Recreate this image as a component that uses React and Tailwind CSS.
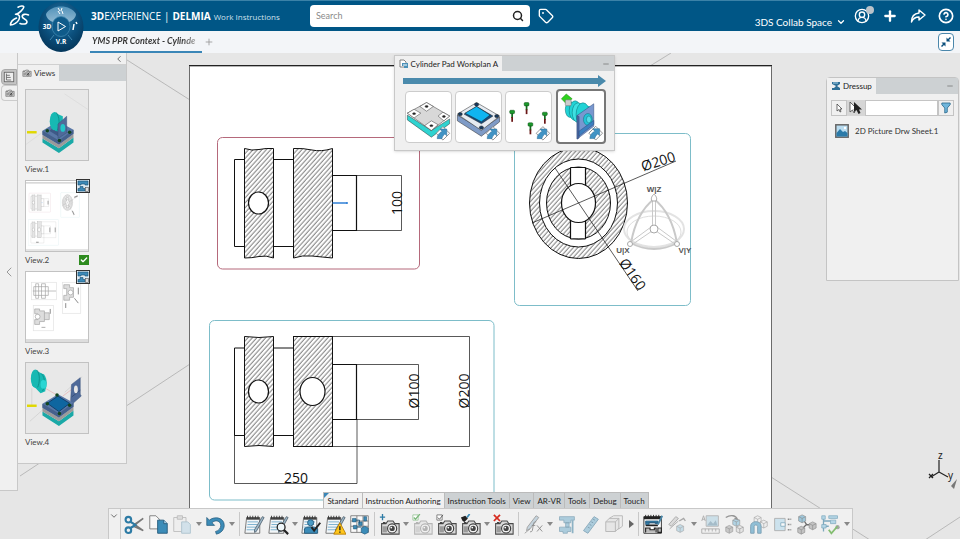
import React, { useState } from 'react';
import { Search, Tag, Plus, ChevronDown, ChevronLeft, CircleHelp, CircleUserRound, Minus, Check } from 'lucide-react';

const RIBBON_TABS = ['Standard', 'Instruction Authoring', 'Instruction Tools', 'View', 'AR-VR', 'Tools', 'Debug', 'Touch'];

/* ---------- technical drawing ---------- */

const Dimension = ({ x, y, angle, children }) => (
    <text
        x={x}
        y={y}
        transform={`rotate(${angle} ${x} ${y})`}
        textAnchor="middle"
        dominantBaseline="central"
        fontSize="14"
        fontFamily="Open Sans, sans-serif"
        fill="#111"
    >
        {children}
    </text>
);

const SheetDrawing = ({ labels }) => (
    <g fill="none" stroke="#111" strokeWidth="1">
        <defs>
            <pattern id="hatch" width="3.3" height="3.3" patternUnits="userSpaceOnUse" patternTransform="rotate(42)">
                <rect width="3.3" height="3.3" fill="#fff" stroke="none" />
                <path d="M1 0V3.3" stroke="#333" strokeWidth="0.65" />
            </pattern>
        </defs>

        {/* side view */}
        <rect x="217.5" y="137.5" width="202" height="131.5" rx="5" stroke="#b5697b" />
        <path d="M244 159.5H234.5V246.5H244M273 159.5H293M273 246.5H293" />
        <path d="M244.5 148.5Q252 151 259 149.5T273.5 148.5V258Q266 255 259 256.5T244.5 258Z" fill="url(#hatch)" />
        <path d="M293.5 148.5Q303 148 312 150T332.500 148.5V258Q322 257 312 256T293.5 258Z" fill="url(#hatch)" />
        <ellipse cx="258.5" cy="203" rx="10" ry="11" fill="#fff" strokeWidth="1.2" />
        <path d="M332.5 175.5H356.5V230.5H332.5" strokeWidth="1.2" />
        <path d="M357 175.5H401.5V230.5H357" strokeWidth="0.7" />
        <path d="M332.5 203H347" stroke="#2f7fd6" strokeWidth="1.5" />
        <circle cx="347" cy="203" r="1" fill="#2f7fd6" stroke="none" />

        {/* lower view with all dimensions */}
        <rect x="209.5" y="320.5" width="284.5" height="179.5" rx="5" stroke="#7dbdc9" />
        <path d="M244 348H234.5V435.5H244M273 348H293M273 435.5H293" />
        <path d="M244.5 336.5Q259 338.5 273.5 336.5V446.5Q259 444.5 244.5 446.5Z" fill="url(#hatch)" />
        <rect x="293.5" y="336.5" width="39" height="110" fill="url(#hatch)" />
        <ellipse cx="258.5" cy="391.5" rx="10" ry="11.5" fill="#fff" strokeWidth="1.2" />
        <ellipse cx="312.5" cy="391.5" rx="12.5" ry="14" fill="#fff" strokeWidth="1.2" />
        <path d="M332.5 364.5H356.5V419.5H332.5" strokeWidth="1.2" />
        <path d="M357 364.5H418.5V419.5H357M332.5 336.5H469.5V446.5H332.5M234.5 435V483.5H357V419" strokeWidth="0.7" />

        {/* section */}
        <rect x="514.5" y="133.5" width="176" height="172" rx="5" stroke="#7dbdc9" />
        <ellipse cx="578.5" cy="203" rx="49" ry="55.5" fill="url(#hatch)" />
        <ellipse cx="578.5" cy="203" rx="39" ry="44" fill="#fff" />
        <ellipse cx="578.5" cy="203" rx="32" ry="36" fill="url(#hatch)" />
        <rect x="570.5" y="167.5" width="15" height="71" fill="#fff" stroke="none" />
        <path d="M570.5 167.5V239M585.5 167.5V239M570.5 167.5H585.5M570.5 239H585.5" strokeWidth="1.2" />
        <ellipse cx="578.5" cy="203" rx="17" ry="19.5" fill="#fff" strokeWidth="1.2" />
        <path d="M532 223L676 161M555 168L638 291" strokeWidth="0.7" />

        {labels ? (
            <g stroke="none">
                <Dimension x={396} y={203} angle={-90}>100</Dimension>
                <Dimension x={413} y={391} angle={-90}>Ø100</Dimension>
                <Dimension x={463} y={391} angle={-90}>Ø200</Dimension>
                <Dimension x={296} y={477} angle={0}>250</Dimension>
                <Dimension x={658} y={161} angle={-18}>Ø200</Dimension>
                <Dimension x={633} y={274} angle={55}>Ø160</Dimension>
            </g>
        ) : (
            <path d="M396 190V216M413 375V408M463 375V408M284 478H308M642 167L674 156M624 260L642 288" stroke="#777" strokeWidth="8" />
        )}
    </g>
);

const Robot = () => (
    <g fill="none" stroke="#c9c9c9">
        <ellipse cx="654" cy="229" rx="30" ry="18" strokeWidth="2" stroke="#e3e3e3" />
        <ellipse cx="654" cy="232" rx="27" ry="16" stroke="#dedede" />
        <path d="M654 199C640 210 634 226 631 243M654 199C668 210 674 226 677 243M631 243C645 251 663 251 677 243" strokeWidth="2" />
        <path d="M652.5 201V226M655.5 201V226M651 227L632 241M652 231L633 244M657 227L676 241M656 231L675 244" />
        <g fill="#fff" stroke="#a8a8a8">
            <circle cx="654" cy="229" r="4" />
            <path d="M652 201C650 198 653 195 654 194C655 195 658 198 656 201Z" />
            <circle cx="630" cy="244" r="2.5" />
            <circle cx="677" cy="244" r="2.5" />
        </g>
        <g fill="#555" stroke="none" fontSize="8" fontWeight="700" fontFamily="Liberation Sans, sans-serif" textAnchor="middle">
            <text x="654" y="192">W|Z</text>
            <text x="623" y="253">U|X</text>
            <text x="685" y="253">V|Y</text>
        </g>
    </g>
);

const AxisTriad = () => (
    <g fill="none" stroke="#222">
        <path d="M939 472V460M939 472L931 477M939 472L948 477" strokeWidth="1.2" />
        <path d="M929 474L933 478M933 474L929 478" strokeWidth="1.3" />
        <path d="M957 479L951 486L954 489Z" fill="#777" stroke="none" />
        <g fill="#222" stroke="none" fontSize="10" fontFamily="Noto Sans, sans-serif">
            <text x="938" y="459">z</text>
            <text x="948" y="479">y</text>
        </g>
    </g>
);

const Viewport = () => (
    <svg className="absolute inset-0 h-full w-full" viewBox="0 53 960 486" preserveAspectRatio="xMidYMid slice">
        <path
            d="M116 53L190 100M20 476L190 364M650 66L671 53M771 477L870 540M925 540L960 517"
            stroke="#adadad"
            strokeWidth="0.8"
            fill="none"
        />
        <rect x="189.5" y="66" width="582" height="500" fill="#fff" stroke="#6b6b6b" />
        <path d="M189 65.500H772" stroke="#222" />
        <SheetDrawing labels />
        <Robot />
        <AxisTriad />
    </svg>
);

/* ---------- header ---------- */

const DsLogo = () => (
    <svg viewBox="0 0 24 24" className="size-6" fill="none" stroke="#fff" strokeWidth="1.6" strokeLinecap="round" strokeLinejoin="round">
        <path d="M10 3.200C12 2 16 1.300 15.800 3C15.500 5.500 11 9 8.500 10.300" />
        <path d="M7.500 10.300C11 10 12.500 12.500 11 15.500C9.500 18.500 5.500 21 2.500 21C2.500 18.500 5 15.500 8.500 14" />
        <path d="M20.500 11C18 9.800 14.200 10 14.200 12.500C14.200 15 19 15 19 17.700C19 20.300 15 20.500 12 19.500" />
    </svg>
);

const CompassButton = () => (
    <button type="button" aria-label="Compass" className="absolute left-[38px] top-px z-10">
        <svg viewBox="0 0 46 51" className="h-[51px] w-[46px]">
            <defs>
                <radialGradient id="globe" cx="50%" cy="35%" r="65%">
                    <stop offset="0" stopColor="#2e7fae" />
                    <stop offset="0.6" stopColor="#0b4f7c" />
                    <stop offset="1" stopColor="#04365a" />
                </radialGradient>
                <linearGradient id="globeLight" x1="0" y1="0" x2="0" y2="1">
                    <stop offset="0" stopColor="#5d9cc2" />
                    <stop offset="1" stopColor="#a3c6dc" />
                </linearGradient>
            </defs>
            <ellipse cx="23" cy="25" rx="22.5" ry="25" fill="url(#globe)" />
            <path d="M8 12C13 2 33 2 38 12C38 16 34 19 31 20C28 14 18 14 15 20C12 19 8 16 8 12Z" fill="url(#globeLight)" opacity="0.85" />
            <ellipse cx="23" cy="24.5" rx="9" ry="10" fill="#0f5b8a" stroke="#3f86af" strokeWidth="0.8" />
            <path d="M20 20V29L27.5 24.5Z" fill="none" stroke="#fff" />
            <path d="M12 38L16 33M34 38L30 33" stroke="#3f86af" />
            <path d="M20 6L22 9M24 6L23 9M20 9L22 12M24 9L25 12" stroke="#fff" fill="none" />
            <path d="M36 22L35 28M38 20L39 22" stroke="#fff" strokeWidth="1.5" />
            <g fill="#fff" fontSize="6.5" fontWeight="700" fontFamily="Open Sans, sans-serif" textAnchor="middle">
                <text x="9" y="27">3D</text>
                <text x="23" y="42">V.R</text>
            </g>
        </svg>
    </button>
);

const ShareIcon = () => (
    <svg viewBox="0 0 16 16" className="size-4" fill="none" stroke="#fff" strokeWidth="1.4" strokeLinejoin="round">
        <path d="M9 2L15 7L9 12V9C5.500 9 3 10.500 1.500 14C1.500 9 4 5.500 9 5Z" />
    </svg>
);

const Header = () => (
    <header className="relative flex h-[31px] items-center border-t border-[#3b82a8] bg-[#005686] text-white">
        <div className="flex w-[91px] pl-2">
            <DsLogo />
        </div>
        <CompassButton />
        <div className="flex w-[219px] items-baseline gap-[3px] whitespace-nowrap font-['Open_Sans',sans-serif] text-[10px]">
            <span><b>3D</b>EXPERIENCE</span>
            <span>|</span>
            <b>DELMIA</b>
            <span className="text-[8px] text-[#cfe0ec]">Work Instructions</span>
        </div>
        <label className="flex h-[22px] w-[220px] items-center rounded-sm bg-white px-1.5">
            <input
                type="search"
                aria-label="Search"
                placeholder="Search"
                className="min-w-0 flex-1 text-[9px] text-gray-800 outline-none placeholder:text-[#8a8a8a]"
            />
            <Search className="size-3 text-[#222]" strokeWidth={3} />
        </label>
        <button type="button" aria-label="Tags" className="ml-2">
            <Tag className="size-4" strokeWidth={2} />
        </button>
        <div className="ml-auto flex items-center gap-3 pr-1.5">
            <button type="button" className="flex items-center gap-1 pt-3 text-[10px] leading-3">
                3DS Collab Space
                <ChevronDown className="size-2.5" strokeWidth={3} />
            </button>
            <button type="button" aria-label="Profile" className="relative -ml-1">
                <CircleUserRound className="size-4" strokeWidth={2} />
                <span className="absolute -right-1 -top-0.5 size-2 rounded-full bg-[#b9c3ca]" />
            </button>
            <button type="button" aria-label="Add"><Plus className="size-4" strokeWidth={3.5} /></button>
            <button type="button" aria-label="Share"><ShareIcon /></button>
            <button type="button" aria-label="Help"><CircleHelp className="size-4" strokeWidth={2.5} /></button>
        </div>
    </header>
);

const TabBar = () => (
    <nav className="flex h-[22px] items-stretch bg-[#f3f5f8] pl-[90px] pr-1.5">
        <a href="#context" className="flex w-28 items-center overflow-hidden whitespace-nowrap border-b-2 border-[#3a86b7] px-0.5 text-[9px] font-bold italic">
            <span className="bg-gradient-to-r from-[#333] from-85% to-[#bbb] bg-clip-text pr-0.5 text-transparent">YMS PPR Context - Cylinde</span>
        </a>
        <button type="button" aria-label="New tab" className="ml-0.5 text-[#999]"><Plus className="size-2.5" /></button>
        <button type="button" aria-label="Exit full screen" className="my-0.5 ml-auto flex w-4 items-center justify-center rounded-sm border border-[#4b87ab] bg-white">
            <svg viewBox="0 0 12 12" className="size-3" fill="#0b4f7c">
                <path d="M6.500 5.500V1.500L8 3L10 1L11 2L9 4L10.500 5.500ZM5.500 6.500V10.500L4 9L2 11L1 10L3 8L1.500 6.500Z" />
            </svg>
        </button>
    </nav>
);

/* ---------- left side ---------- */

const CameraShape = ({ faded }) => (
    <g opacity={faded ? 0.35 : 1}>
        <path d="M2 8H7L9 5H15L17 8H22V20H2Z" fill="#d9d9d9" stroke="#4a4a4a" strokeWidth="1.2" />
        <path d="M3 11H8V18H3Z" fill="#9b9b9b" />
        <path d="M3.500 7H6.500" stroke="#333" strokeWidth="1.5" />
        <circle cx="14" cy="13.500" r="5.2" fill="#f4f4f4" stroke="#3d3d3d" strokeWidth="1.3" />
        <circle cx="14" cy="13.500" r="3" fill="#444" />
        <circle cx="13" cy="12.500" r="1" fill="#fff" />
    </g>
);

const TreeIcon = () => (
    <svg viewBox="0 0 14 14" className="size-3" fill="none" stroke="#666">
        <rect x="1.500" y="1.500" width="11" height="11" fill="#eee" />
        <path d="M4 3V10.500H9.500M4 5H8M4 7.500H9" />
    </svg>
);

const SheetBadge = () => (
    <svg viewBox="0 0 14 14" className="size-3.5">
        <rect x="0.500" y="0.500" width="13" height="13" fill="#dceaf2" stroke="#333" />
        <path d="M2 2H12V6H9V5H5V6H2Z" fill="#3d8ab8" stroke="#1d4e70" strokeWidth="0.6" />
        <path d="M2 12V9.500H4V7.500H7V9.500H9V12Z" fill="#3d8ab8" stroke="#1d4e70" strokeWidth="0.6" />
        <rect x="9.500" y="8.500" width="3" height="4" fill="#ddd" stroke="#555" strokeWidth="0.6" />
    </svg>
);

const IsoBase = ({ open }) => (
    <g>
        <path d="M17 50L34 60L49 49V54L34 65L17 54Z" fill="#1aa9a7" />
        <path d="M17 46L34 56L49 45V49L34 60L17 50Z" fill="#9a9a9a" />
        <path d="M17 42L33 32L49 41V45L34 56L17 46Z" fill="#5877a6" />
        <path d="M17 42L34 52L49 41V45L34 56L17 46Z" fill="#45608c" />
        {open && <path d="M22 41.500L33 34L45 41.500L34 50Z" fill="#0f66a0" stroke="#123f6b" />}
        {!open && <path d="M24 42L33 36L42 41L34 48Z" fill="#3e5987" />}
        {[[22, 42], [34.5, 52], [45, 43.5], ...(open ? [[32, 33]] : [])].map(([x, y]) => (
            <circle key={x} cx={x} cy={y} r="1.8" fill="#12451f" />
        ))}
    </g>
);

const AssemblyThumb = () => (
    <svg viewBox="0 0 64 72" className="h-full w-full">
        <path d="M0 56L30 34M64 20L40 4" stroke="#ddd" />
        <path d="M1 43.500H11" stroke="#e0d800" strokeWidth="2.5" />
        <IsoBase />
        <path d="M29 23L38 27V44L30 42Z" fill="#17b9b3" />
        <ellipse cx="29.500" cy="32" rx="5" ry="9.500" fill="#17b9b3" />
        <path d="M31 23C35 27 35 37 32 42" stroke="#0c8783" fill="none" strokeWidth="0.8" />
        <path d="M33 35L42 27V44L33 50Z" fill="#4f6a99" stroke="#38507a" strokeWidth="0.5" />
        <ellipse cx="38" cy="39" rx="2.5" ry="4" fill="#22c5c8" />
    </svg>
);

const ExplodedThumb = () => (
    <svg viewBox="0 0 64 72" className="h-full w-full">
        <path d="M6 26V44M4 60L22 44M40 30L58 14" stroke="#d5d5d5" fill="none" />
        <path d="M20 26L32 33M38 34L50 25" stroke="#e7a4a4" strokeWidth="0.6" />
        <path d="M1 44H11" stroke="#e0d800" strokeWidth="2.5" />
        <path d="M9 7L19 12L20 29L15 31L9 25Z" fill="#17b9b3" />
        <ellipse cx="9.500" cy="16" rx="4.5" ry="9.5" fill="#17b9b3" />
        <ellipse cx="16" cy="20.500" rx="5.5" ry="9.5" fill="#17b9b3" />
        <path d="M11 7C15 11 14 21 12 25M16 11C20 15 20 24 17 29" stroke="#0c8783" fill="none" strokeWidth="0.8" />
        <ellipse cx="18" cy="22" rx="3" ry="4.5" fill="#2bd6d3" />
        <path d="M47 22L56 15V32L57 34L48 42L46 39Z" fill="#4f6a99" stroke="#38507a" strokeWidth="0.5" />
        <path d="M47 35L56 28" stroke="#38507a" />
        <ellipse cx="51.500" cy="27" rx="2" ry="4" fill="#e6e6e6" />
        <IsoBase open />
    </svg>
);

const SheetThumb = () => (
    <svg viewBox="189 53 582 486" preserveAspectRatio="none" className="h-full w-full bg-[#fff]">
        <path d="M189 66H771" stroke="#ccc" strokeWidth="10" />
        <path d="M189 532H771" stroke="#ddd" strokeWidth="12" />
        <g opacity="0.8" strokeWidth="2"><SheetDrawing /></g>
    </svg>
);

const SectionsThumb = () => (
    <svg viewBox="0 0 64 72" className="h-full w-full bg-white" fill="none" stroke="#a3a3a3" strokeWidth="0.7">
        <path d="M0 70.500H64" stroke="#ddd" strokeWidth="3" />
        <rect x="5.500" y="10.500" width="26" height="18" stroke="#e2e2e2" />
        <rect x="37.500" y="10.500" width="19" height="32" stroke="#e2e2e2" />
        <rect x="7.500" y="34.500" width="21" height="26" stroke="#e2e2e2" />
        <path d="M8 15H23V24H8ZM10 12H13V27H10ZM16 12H20V27H16ZM7 19.500H31" />
        <path d="M39 13H45V16H49V26H45V29H39V24H42V17H39Z" fill="#ddd" />
        <circle cx="46" cy="21" r="2.5" fill="#fff" />
        <path d="M54 16V23M41 32V37M50 27L54 32M25 38V43" stroke="#888" strokeWidth="1" />
        <path d="M9 38H14V40H19V51H14V54H9V49H12V43H9ZM19 42H24V49H19" fill="#ddd" />
        <circle cx="12" cy="46" r="2.5" fill="#fff" />
        <path d="M16 57H20" stroke="#888" />
    </svg>
);

const views = [
    { name: 'View.1', Picture: AssemblyThumb },
    { name: 'View.2', Picture: SheetThumb, sheet: true, current: true },
    { name: 'View.3', Picture: SectionsThumb, sheet: true },
    { name: 'View.4', Picture: ExplodedThumb },
];

const ViewsPanel = () => (
    <section className="w-[109px] self-start border-b border-r border-[#c8c8c8] bg-[#f0f0f0] pb-2.5">
        <div className="flex h-3 items-center justify-end border-b border-[#d0d0d0] pr-0.5">
            <button type="button" aria-label="Collapse"><ChevronLeft className="size-2.5 text-[#555]" /></button>
        </div>
        <div className="flex h-4 bg-[#cdd1d3]">
            <h2 className="flex items-center gap-0.5 bg-[#f0f0f0] px-1 text-[8px] text-[#333]">
                <svg viewBox="0 0 24 24" className="size-2.5"><CameraShape /></svg>
                Views
            </h2>
        </div>
        <ul className="px-[7px] pt-2">
            {views.map(({ name, Picture, sheet, current }) => (
                <li key={name} className="w-16">
                    <button type="button" className="relative block h-[72px] w-full border border-[#c2c2c2] bg-[#e8e8e8]" aria-label={`Open ${name}`}>
                        <Picture />
                        {sheet && <span className="absolute -right-0.5 -top-0.5"><SheetBadge /></span>}
                    </button>
                    <div className="flex h-[19px] items-center justify-between pb-1 text-[8px] text-[#444]">
                        {name}
                        {current && (
                            <span className="flex size-2.5 items-center justify-center bg-[#2e8b1f] text-white">
                                <Check className="size-2" strokeWidth={4} />
                            </span>
                        )}
                    </div>
                </li>
            ))}
        </ul>
    </section>
);

const SideRail = () => (
    <aside className="mb-12 flex w-[18px] flex-col items-end border-b border-r border-[#c8c8c8] bg-[#f0f0f0] pb-12 pt-4">
        <button type="button" aria-label="Tree" className="flex h-4 w-4 items-center justify-center rounded-l-sm border border-[#aaa] bg-[#c4c4c4]"><TreeIcon /></button>
        <button type="button" aria-label="Views" className="flex h-4 w-4 items-center justify-center rounded-l-sm border border-r-0 border-[#ccc]">
            <svg viewBox="0 0 24 24" className="size-2.5"><CameraShape /></svg>
        </button>
        <button type="button" aria-label="Hide panels" className="my-auto text-[#999]"><ChevronLeft className="size-4" strokeWidth={1.5} /></button>
    </aside>
);

/* ---------- floating panels ---------- */

const LinkBadge = () => (
    <g strokeLinejoin="round">
        <path d="M38 36L45 43L38 50L31 43Z" fill="#fff" stroke="#777" strokeWidth="0.8" />
        <path d="M35 38.500H42V45.500L40 43.800C38 45.500 37.500 47 37 48.500L32 48.500C32 45 34 42.500 37 41Z" fill="#4193c4" stroke="#2a6a95" strokeWidth="0.5" />
    </g>
);

const PadArt = () => (
    <g stroke="#333" strokeWidth="0.5" strokeLinejoin="round">
        <path d="M1 24L26 40L45 28V33L26 47L1 29Z" fill="#2fd3d0" />
        <path d="M1 22L21 11L45 25L26 40Z" fill="#d8d8d8" />
        <path d="M14 15L21 11L28 15L21 20ZM1 22L8 18L15 22L8 27ZM33 25L38 21L45 25L39 30ZM19 35L26 30L33 34L26 40Z" fill="#fff" />
        {[[21, 15], [8, 22.5], [39, 25.5], [26, 35]].map(([x, y]) => <ellipse key={x} cx={x} cy={y} rx="1.6" ry="1" fill="#222" />)}
    </g>
);

const FrameArt = () => (
    <g stroke="#222" strokeWidth="0.5" strokeLinejoin="round">
        <path d="M1 24L26 39L45 26V31L26 46L1 30Z" fill="#7f9bc6" />
        <path d="M1 23L21 11L45 25L26 40Z" fill="#e6ebf1" />
        <path d="M8 23L21 15L38 25L26 33Z" fill="#154c7e" />
        <path d="M9 22L21 15L35 24L26 31Z" fill="#0fb5f0" />
        {[[21, 13], [4, 23], [42, 25], [26, 37]].map(([x, y]) => <ellipse key={x} cx={x} cy={y} rx="2.2" ry="1.7" fill="#16395e" />)}
    </g>
);

const BoltsArt = () => (
    <g>
        {[[21, 11], [6, 19], [40, 21], [25, 32]].map(([x, y]) => (
            <g key={x}>
                <rect x={x - 2.5} y={y} width="5" height="3.5" rx="1" fill="#1c9a2c" stroke="#0a4a12" strokeWidth="0.5" />
                <path d={`M${x} ${y + 3}V${y + 8}`} stroke="#126a1e" strokeWidth="1.8" />
                <path d={`M${x} ${y + 7}V${y + 12}`} stroke="#6a1616" strokeWidth="1.8" />
            </g>
        ))}
    </g>
);

const CylinderArt = () => (
    <g stroke="#0a6a70" strokeWidth="0.5" strokeLinejoin="round">
        <path d="M13 11L34 16V37L26 37L13 28Z" fill="#22d3d6" stroke="none" />
        <ellipse cx="12" cy="19" rx="5" ry="8" fill="#22d3d6" />
        <ellipse cx="17" cy="20" rx="6" ry="10" fill="#22d3d6" />
        <ellipse cx="20" cy="22" rx="6" ry="10" fill="#3ee0e2" />
        <ellipse cx="25" cy="24" rx="7" ry="12" fill="#22d3d6" />
        <path d="M19 25L36 13V36L19 49Z" fill="#7897cf" stroke="#2e4779" />
        <path d="M19 25L21 26V48L19 49Z" fill="#4c6aa5" stroke="#2e4779" />
        <ellipse cx="30" cy="29" rx="4.5" ry="6" fill="#22c3d9" />
        <ellipse cx="31" cy="29" rx="2.5" ry="3.5" fill="#55dbe8" />
        <path d="M21 41L36 30V34L21 46Z" fill="#3c7fc0" stroke="#2e4779" />
        <path d="M8 3L14 8L8 13L3 8Z" fill="#2fd21f" stroke="#1c8712" />
        <rect x="7" y="9" width="6" height="6" rx="1" fill="#ccc" stroke="#666" />
    </g>
);

const steps = [
    { name: 'Pad', Art: PadArt },
    { name: 'Frame', Art: FrameArt },
    { name: 'Bolts', Art: BoltsArt },
    { name: 'Cylinder', Art: CylinderArt },
];

const WorkplanPanel = () => {
    const [selected, setSelected] = useState(3);
    return (
        <section className="absolute left-[41%] top-0.5 w-[221px] border border-[#c8c8c8] bg-[#f0f0f0] shadow-sm">
            <div className="flex h-[15px] items-center justify-between bg-[#cdd1d3] pr-1">
                <h2 className="flex h-full items-center gap-0.5 bg-[#f0f0f0] px-1 text-[8px] text-[#222]">
                    <svg viewBox="0 0 10 10" className="size-2.5">
                        <path d="M1 1H5L7 3V8H1Z" fill="#fff" stroke="#666" strokeWidth="0.8" />
                        <path d="M3 4H9V9H5V7H3Z" fill="#4a90b8" />
                        <path d="M4 6H8" stroke="#fff" />
                    </svg>
                    Cylinder Pad Workplan A
                </h2>
                <button type="button" aria-label="Minimize" className="text-[#666]"><Minus className="size-2" /></button>
            </div>
            <div className="flex flex-col px-2 pb-1.5 pt-1">
                <svg viewBox="0 0 203 12" preserveAspectRatio="none" className="h-3 w-full" fill="#4a8aac">
                    <path d="M0 3H195V0L203 6L195 12V9H0Z" />
                </svg>
                <div className="mt-0.5 flex items-center justify-between pl-0.5">
                    {steps.map(({ name, Art }, index) => (
                        <button
                            key={name}
                            type="button"
                            aria-label={name}
                            onClick={() => setSelected(index)}
                            className={`rounded-sm bg-white ${
                                selected === index ? 'h-[55px] w-[50px] border-2 border-[#777]' : 'h-[52px] w-[47px] border border-[#ccc]'
                            }`}
                        >
                            <svg viewBox="0 0 46 52" className="h-full w-full">
                                <Art />
                                <LinkBadge />
                            </svg>
                        </button>
                    ))}
                </div>
            </div>
        </section>
    );
};

const DressupPanel = () => (
    <section className="absolute right-px top-6 h-[204px] w-[133px] rounded-t-sm border border-[#c4c4c4] bg-[#f0f0f0]">
        <div className="flex h-4 items-center justify-between bg-[#cdd1d3] pr-1">
            <h2 className="flex h-full items-center gap-0.5 bg-[#f0f0f0] px-1 text-[8px] text-[#222]">
                <svg viewBox="0 0 10 10" className="size-2.5">
                    <path d="M1 1H9V3L6 5L9 7V9H1V7H3L5 5L1 3Z" fill="#2f6f96" />
                    <path d="M2 2H7" stroke="#a8d3ea" />
                </svg>
                Dressup
            </h2>
            <button type="button" aria-label="Minimize" className="text-[#666]"><Minus className="size-2" /></button>
        </div>
        <div className="flex items-center px-1 pt-1.5">
            <button type="button" aria-label="Select" className="flex h-4 w-4 items-center justify-center border border-[#c4c4c4]">
                <svg viewBox="0 0 10 10" className="size-2.5"><path d="M3 1V8L5 6.500L6 9L7 8.500L6 6H8Z" fill="#fff" stroke="#333" strokeWidth="0.7" /></svg>
            </button>
            <button type="button" aria-label="Multi select" className="flex h-4 w-[18px] items-center justify-center bg-[#d6d6d6]">
                <svg viewBox="0 0 14 14" className="size-3.5">
                    <path d="M1 1V11L3.500 9L5 12L6 11L5 8H8Z" fill="#fff" stroke="#444" strokeWidth="0.8" />
                    <path d="M5 1V11L7.500 9L9.500 13L11.500 12L10 8.500H13Z" fill="#222" />
                </svg>
            </button>
            <input type="text" aria-label="Filter" className="h-4 min-w-0 flex-1 border border-[#c4c4c4] bg-white px-1 text-[8px]" />
            <button type="button" aria-label="Apply filter" className="flex h-4 w-4 items-center justify-center border border-[#c4c4c4]">
                <svg viewBox="0 0 12 14" className="h-3 w-2.5"><path d="M1 1H11V3L7.500 7V12L4.500 13V7L1 3Z" fill="#6fb6dc" stroke="#2d6a8e" /></svg>
            </button>
        </div>
        <div className="flex items-center gap-1.5 px-2 pt-2 text-[8px] text-[#333]">
            <svg viewBox="0 0 14 14" className="size-3.5">
                <rect x="0.800" y="0.800" width="12.4" height="12.4" fill="#b9dcf0" stroke="#666" strokeWidth="1.5" />
                <path d="M1.500 9L5 5L8 8L10 7L12.500 9V12.500H1.500Z" fill="#2b7aa8" />
                <circle cx="10" cy="4" r="1.2" fill="#fff" />
            </svg>
            2D Picture Drw Sheet.1
        </div>
    </section>
);

/* ---------- bottom toolbar ---------- */

const Notebook = () => (
    <g>
        <path d="M3 4H18V22H1Z" fill="#f3f6f8" stroke="#6b6b6b" />
        <path d="M3 4H18V6.500H3Z" fill="#444" />
        <path d="M4 2V5M7 2V5M10 2V5M13 2V5M16 2V5" stroke="#333" />
        <path d="M4 9H16M4 12H15M3 15H14M3 18H13" stroke="#6ea9cc" />
    </g>
);
const Pencil = () => <path d="M21 3L23 4L14 20L12 21V18Z" fill="#9db8c9" stroke="#3d4f5b" strokeWidth="0.8" />;
const Cube = ({ x, y, fill = '#bcbcbc' }) => (
    <g stroke="#777" strokeWidth="0.7" strokeLinejoin="round">
        <path d={`M${x} ${y + 2}L${x + 4} ${y}L${x + 8} ${y + 2}V${y + 7}L${x + 4} ${y + 9}L${x} ${y + 7}Z`} fill={fill} />
        <path d={`M${x} ${y + 2}L${x + 4} ${y + 4}L${x + 8} ${y + 2}M${x + 4} ${y + 4}V${y + 9}`} fill="none" />
    </g>
);

const art = {
    Cut: (
        <g fill="none" stroke="#2d7ba5" strokeWidth="2.4">
            <path d="M8 9L22 19L11 14M8 16L22 5L12 12" stroke="#777" strokeWidth="1.8" />
            <circle cx="5" cy="6.500" r="3.2" />
            <circle cx="5" cy="18.500" r="3.2" />
            <path d="M7.500 9L13 12.500L7.500 16" />
        </g>
    ),
    Copy: (
        <g strokeLinejoin="round">
            <path d="M2 2H9L13 6V17H2Z" fill="#f7f7f7" stroke="#777" />
            <path d="M11 7H18L22 11V22H11Z" fill="#3c8cb8" stroke="#24597a" />
            <path d="M18 7V11H22" fill="#a9d0e6" stroke="#24597a" />
        </g>
    ),
    Paste: (
        <g opacity="0.5" strokeLinejoin="round">
            <path d="M2 4H16V20H2Z" fill="#eee" stroke="#888" />
            <path d="M6 2H12V6H6Z" fill="#ccc" stroke="#888" />
            <path d="M11 9H18L21 12V22H11Z" fill="#b5d4e5" stroke="#6a95ad" />
        </g>
    ),
    Undo: <path d="M2 4V13H11L8 10C12 6 18 8 18 13C18 16 16 19 12 20L13 23C18 22 22 18 22 13C22 4 11 2 5 7Z" fill="#3c8cb8" stroke="#24597a" strokeWidth="0.8" />,
    'Edit text': <g><Notebook /><Pencil /></g>,
    'Find text': (
        <g>
            <Notebook /><Pencil />
            <circle cx="15" cy="15" r="4.5" fill="#eef6fa" stroke="#222" strokeWidth="1.5" />
            <path d="M18 18L23 23" stroke="#222" strokeWidth="2.5" />
        </g>
    ),
    'Sign off': (
        <g>
            <Notebook />
            <circle cx="11" cy="10" r="3.5" fill="#4a9ac4" stroke="#24597a" />
            <path d="M4 22V17C4 14 19 14 19 17V22Z" fill="#3c8cb8" stroke="#24597a" />
            <path d="M12 15L15 19L22 10" fill="none" stroke="#222" strokeWidth="2.2" />
        </g>
    ),
    'Warning note': (
        <g>
            <Notebook /><Pencil />
            <path d="M17 10L24 23H10Z" fill="#ffc61a" stroke="#b87b00" strokeLinejoin="round" />
            <path d="M17 14V18.500M17 20V21.500" stroke="#222" strokeWidth="1.6" />
        </g>
    ),
    'Process table': (
        <g>
            <path d="M2 2H22V21H2ZM2 8H22M2 14H22M9 2V21M16 2V21" fill="#fafafa" stroke="#777" />
            <path d="M4 5H8V9H4ZM5 13H9V17H5ZM11 9H15V13H11ZM17 3H20V8H17ZM14 16L18 14L22 16V21L18 23L14 21Z" fill="#3c8cb8" stroke="#24597a" strokeWidth="0.7" />
            <path d="M8 7H12V11M9 15H14" stroke="#24597a" fill="none" />
        </g>
    ),
    'New capture': <g><g transform="translate(1 3)"><CameraShape /></g><path d="M4 0V7M1 3.500H7" stroke="#2d7ba5" strokeWidth="1.5" /></g>,
    'Validate capture': (
        <g><g transform="translate(1 3)"><CameraShape faded /></g><path d="M1 1H7V7H1Z" fill="#fff" stroke="#9cc79c" /><path d="M2 4L4 6L9 0" fill="none" stroke="#7db87d" strokeWidth="1.5" /></g>
    ),
    'Check capture': (
        <g><g transform="translate(1 3)"><CameraShape /></g><path d="M1 1H7V7H1Z" fill="#fff" stroke="#777" /><path d="M2 4L4 6L8 1" fill="none" stroke="#555" /></g>
    ),
    'Paint capture': (
        <g><g transform="translate(1 3)"><CameraShape /></g><path d="M1 4L6 2L9 5L5 9L3 8Z" fill="#222" /><path d="M8 4L11 0" stroke="#3c8cb8" strokeWidth="2" /></g>
    ),
    'Delete capture': <g><g transform="translate(1 3)"><CameraShape /></g><path d="M1 1L8 8M8 1L1 8" stroke="#d62a1e" strokeWidth="2" /></g>,
    Formula: (
        <g opacity="0.6">
            <path d="M15 2L18 4L8 17L4 19L5 15Z" fill="#a9c3d3" stroke="#666" />
            <path d="M2 22L8 17" stroke="#666" />
            <path d="M15 9C12 8 12 12 11 17C11 20 9 21 8 20M10 13H14M16 13L22 20M22 13L16 20" stroke="#444" fill="none" />
        </g>
    ),
    Measure: (
        <g opacity="0.6">
            <path d="M4 3H21V7H17V10H9V7H4ZM11 10H15V15H11ZM4 15H17V20H13V22H8V20H4Z" fill="#7fb5d0" stroke="#3f7592" strokeWidth="0.8" />
            <path d="M19 7V22" stroke="#4d8aa8" strokeWidth="2" />
        </g>
    ),
    Ruler: (
        <g opacity="0.6">
            <path d="M16 3L21 6L9 22L4 19Z" fill="#7fb5d0" stroke="#3f7592" />
            <path d="M15 6L17 7M13 9L15 10M11 12L13 13M9 15L11 16" stroke="#2f5f7a" />
        </g>
    ),
    Box: (
        <g opacity="0.5" fill="#eee" stroke="#777" strokeLinejoin="round">
            <path d="M6 5L11 2H21V14L17 17H6Z" />
            <path d="M2 9H13V20H2ZM2 9L6 5H17V16L13 20M13 9L17 5" fill="#ddd" />
        </g>
    ),
    'Work sheet': (
        <g>
            <path d="M1 3H21V22H1Z" fill="#fff" stroke="#222" />
            <path d="M1 3H21V6H1ZM3 12H17V14H3Z" fill="#222" />
            <path d="M3 1V4M6 1V4M9 1V4M12 1V4M15 1V4M18 1V4" stroke="#222" />
            <path d="M3 8H17V11H14V10H7V12H3ZM3 10H18" fill="#3c8cb8" stroke="#1d4e70" strokeWidth="0.8" />
            <path d="M3 21V16H8V18H13V16H15V21M17 16H21V21H17Z" fill="#bbb" stroke="#222" strokeWidth="1.3" />
            <path d="M22 2L17 12" stroke="#4a87a8" strokeWidth="2" />
        </g>
    ),
    Tooling: (
        <g opacity="0.6">
            <path d="M2 12L10 3L13 5L5 14ZM3 17L13 8" fill="#ccc" stroke="#777" />
            <Cube x={11} y={12} fill="#a8cfe2" />
            <path d="M14 8L19 5L21 8" fill="none" stroke="#777" strokeWidth="1.5" />
        </g>
    ),
    Picture: (
        <g opacity="0.5">
            <path d="M7 2H21V14H7Z" fill="#a8cfe2" stroke="#777" />
            <path d="M8 13L12 8L15 11L18 7L20 13Z" fill="#5d8aa3" />
            <path d="M2 8L4 2L6 8M2.500 6H5.500M2 17H22V22H2ZM6 17V20M10 17V20M14 17V20M18 17V20" fill="none" stroke="#666" />
        </g>
    ),
    'Swap part': (
        <g opacity="0.75">
            <Cube x={2} y={13} />
            <Cube x={14} y={13} fill="#e2e2e2" />
            <Cube x={10} y={5} fill="#9ccbe2" />
            <path d="M2 4C8 0 14 2 15 6L12 5" fill="none" stroke="#777" strokeWidth="1.5" />
        </g>
    ),
    Snap: (
        <g opacity="0.65">
            <Cube x={7} y={2} fill="#eee" />
            <Cube x={14} y={7} fill="#eee" />
            <path d="M3 22V14C3 7 15 7 15 14V22H11V14C11 12 7 12 7 14V22Z" fill="#5ea5c9" stroke="#3f7592" />
        </g>
    ),
    Align: (
        <g opacity="0.65">
            <path d="M3 5H15V19H3Z" fill="#b9dcec" stroke="#888" />
            <path d="M10 10H15V14H10Z" fill="#fff" stroke="#4d8aa8" />
            <path d="M18 6H22M18 12H22M18 18H22" stroke="#555" strokeWidth="1.5" strokeDasharray="2 1" />
        </g>
    ),
    Structure: (
        <g opacity="0.85">
            <path d="M8 6L12 12L6 18M12 12L19 13" stroke="#555" strokeWidth="1.5" fill="none" />
            <Cube x={3} y={1} fill="#8fc0d8" />
            <Cube x={15} y={9} />
            <Cube x={2} y={14} />
        </g>
    ),
    'Check structure': (
        <g opacity="0.7">
            <path d="M4 4V20M4 8H12M4 14H10" stroke="#4d8aa8" strokeWidth="1.5" fill="none" />
            <path d="M10 2H20V5H10ZM12 7H18V11H12ZM2 2H6V6H2ZM2 12H7V16H2Z" fill="#9ccbe2" stroke="#4d8aa8" strokeWidth="0.8" />
            <circle cx="20" cy="15" r="2.5" fill="#888" />
            <path d="M10 18L13 22L20 14" fill="none" stroke="#55a83a" strokeWidth="2" />
        </g>
    ),
};

const toolbar = [
    'Cut', 'Copy', 'Paste', 'v', 'Undo', 'v', '|',
    'Edit text', 'Find text', 'v', 'Sign off', 'Warning note', 'Process table', '|',
    'New capture', 'v', 'Validate capture', 'Check capture', 'Paint capture', 'v', 'Delete capture', '|',
    'Formula', 'v', 'Measure', 'Ruler', 'Box', '>', '|',
    'Work sheet', 'Tooling', 'v', 'Picture', 'Swap part', 'Snap', 'Align', 'Structure', 'Check structure', 'v',
];

const ToolbarItem = ({ item }) => {
    if (item === '|') return <span className="mx-0.5 h-6 w-0.5 border-l border-[#c8c8c8]" />;
    if (item === 'v' || item === '>') {
        return (
            <button type="button" aria-label="More" className="flex w-[9px] justify-center">
                <svg viewBox="0 0 6 8" className="h-2 w-1.5" fill={item === '>' ? '#666' : '#888'}>
                    <path d={item === '>' ? 'M1 0L6 4L1 8Z' : 'M0 2H6L3 6Z'} />
                </svg>
            </button>
        );
    }
    return (
        <button type="button" aria-label={item} className="flex w-6 justify-center">
            <svg viewBox="0 0 24 24" className="size-[21px]">{art[item]}</svg>
        </button>
    );
};

const BottomBar = () => {
    const [active, setActive] = useState('Instruction Authoring');
    return (
        <footer className="absolute inset-x-0 bottom-0 flex flex-col items-center">
            <div className="ml-3 flex border border-b-0 border-[#bbb]">
                {RIBBON_TABS.map((tab) => (
                    <button
                        key={tab}
                        type="button"
                        onClick={() => setActive(tab)}
                        className={`relative h-[15px] border-r border-[#bbb] px-[3px] text-[8px] text-[#222] last:border-r-0 ${
                            tab === active || tab === 'Standard' ? 'bg-[#f0f0f0]' : 'bg-[#cdd1d3]'
                        }`}
                    >
                        {tab === 'Standard' && (
                            <svg viewBox="0 0 5 5" className="absolute left-0 top-0 size-[5px]"><path d="M0 0H5L0 5Z" fill="#3a86b7" /></svg>
                        )}
                        {tab}
                    </button>
                ))}
            </div>
            <div className="flex h-[31px] items-center border border-b-0 border-[#c8c8c8] bg-[#f0f0f0]">
                <button type="button" aria-label="Collapse toolbar" className="mr-0.5 flex h-full w-3 justify-center border-r border-[#c8c8c8] pt-0.5">
                    <ChevronDown className="size-2.5 text-[#555]" />
                </button>
                {toolbar.map((item, index) => <ToolbarItem key={index} item={item} />)}
            </div>
        </footer>
    );
};

const App = () => (
    <div className="flex min-h-screen flex-col overflow-hidden bg-[#e6e6e6] font-['Lato','Noto_Sans',sans-serif]">
        <Header />
        <TabBar />
        <main className="relative flex flex-1">
            <Viewport />
            <div className="relative flex">
                <SideRail />
                <ViewsPanel />
            </div>
            <WorkplanPanel />
            <DressupPanel />
            <BottomBar />
        </main>
    </div>
);

export default App;
